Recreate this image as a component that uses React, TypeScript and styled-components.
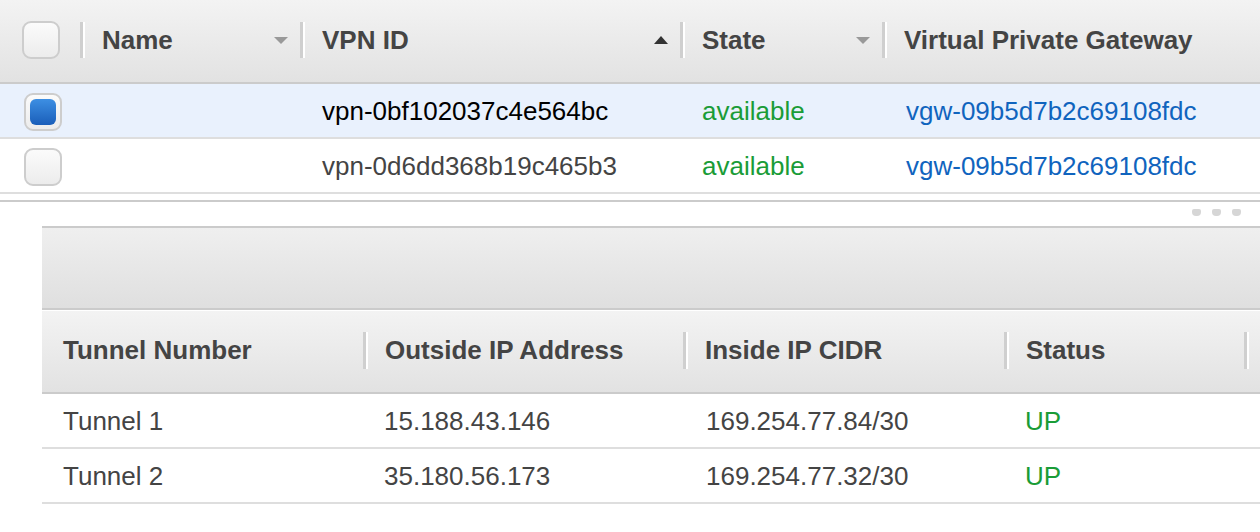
import styled, { createGlobalStyle } from "styled-components";

const GlobalStyle = createGlobalStyle`
  html, body {
    margin: 0;
    padding: 0;
    background: #fff;
  }
  body {
    font-family: "Liberation Sans", Arial, sans-serif;
    width: 1260px;
    height: 532px;
    overflow: hidden;
  }
`;

const Page = styled.div`
  width: 1260px;
  display: flex;
  flex-direction: column;
`;

const GridRow = styled.div<{ $cols: string; $selected?: boolean }>`
  display: grid;
  grid-template-columns: ${(p) => p.$cols};
  align-items: center;
  box-sizing: border-box;
  height: 55px;
  padding-top: 2px;
  border-bottom: 2px solid #dedede;
  background: ${(p) => (p.$selected ? "#e9f1fd" : "#fff")};
  color: ${(p) => (p.$selected ? "#000" : "#444")};
  font-size: 26px;
`;

const HeadRow = styled.div<{ $cols: string; $h: number }>`
  display: grid;
  grid-template-columns: ${(p) => p.$cols};
  align-items: center;
  box-sizing: border-box;
  height: ${(p) => p.$h}px;
  padding-bottom: 2px;
  background: linear-gradient(#f3f3f3, #e2e2e2);
  border-bottom: 2px solid #cbcbcb;
  color: #444;
  font-size: 26px;
  font-weight: bold;
`;

const HeadCell = styled.div<{ $sep?: boolean; $h: number }>`
  display: flex;
  align-items: center;
  height: ${(p) => p.$h}px;
  padding: 0 12px 0 ${(p) => (p.$sep ? 19 : 21)}px;
  border-left: ${(p) => (p.$sep ? "3px solid #cfcfcf" : "none")};
  box-shadow: ${(p) => (p.$sep ? "inset 2px 0 0 #fff" : "none")};
  white-space: nowrap;
`;

const Label = styled.span`
  flex: 1;
`;

const Arrow = styled.span<{ $up?: boolean; $dark?: boolean }>`
  width: 0;
  height: 0;
  border-left: 7px solid transparent;
  border-right: 7px solid transparent;
  ${(p) =>
    p.$up
      ? `border-bottom: 8px solid ${p.$dark ? "#333" : "#999"};`
      : `border-top: 7px solid ${p.$dark ? "#333" : "#999"};`}
`;

const Cell = styled.div<{ $pad?: number; $tone?: "green" | "blue" }>`
  padding-left: ${(p) => p.$pad ?? 22}px;
  white-space: nowrap;
  color: ${(p) =>
    p.$tone === "green" ? "#1a9c37" : p.$tone === "blue" ? "#1064be" : "inherit"};
`;

const Check = styled.div<{ $on?: boolean }>`
  width: 34px;
  height: 34px;
  border: 2px solid #cdcdcd;
  border-radius: 9px;
  background: linear-gradient(#fbfbfb, #ececec);
  display: flex;
  align-items: center;
  justify-content: center;
  &::after {
    content: "";
    display: ${(p) => (p.$on ? "block" : "none")};
    width: 26px;
    height: 26px;
    border-radius: 6px;
    background: linear-gradient(#3d8fe3, #1a5eb9);
  }
`;

const CheckCell = styled.div<{ $x: number }>`
  padding-left: ${(p) => p.$x}px;
`;

const Splitter = styled.div`
  margin-top: 6px;
  border-top: 2px solid #cbcbcb;
  height: 26px;
  display: flex;
  justify-content: flex-end;
  align-items: center;
  gap: 11px;
  padding-right: 19px;
  padding-bottom: 4px;
  box-sizing: border-box;
`;

const Grip = styled.span`
  width: 9px;
  height: 7px;
  border-radius: 2px 2px 4px 4px;
  background: #d6d6d6;
`;

const Detail = styled.div`
  margin-left: 42px;
  border-top: 2px solid #cbcbcb;
`;

const Toolbar = styled.div`
  height: 80px;
  background: linear-gradient(#efefef, #dfdfdf);
  border-bottom: 2px solid #cbcbcb;
  margin-bottom: 1px;
`;

const TunnelRow = styled(GridRow)`
  color: #444;
`;

const topCols = "80px 220px 380px 202px 1fr";
const tunCols = "321px 320px 321px 240px 1fr";

const vpns = [
  { id: "vpn-0bf102037c4e564bc", state: "available", vgw: "vgw-09b5d7b2c69108fdc", on: true },
  { id: "vpn-0d6dd368b19c465b3", state: "available", vgw: "vgw-09b5d7b2c69108fdc", on: false },
];

const tunnels = [
  { name: "Tunnel 1", outside: "15.188.43.146", inside: "169.254.77.84/30", status: "UP" },
  { name: "Tunnel 2", outside: "35.180.56.173", inside: "169.254.77.32/30", status: "UP" },
];

export default function App() {
  return (
    <Page>
      <GlobalStyle />
      <HeadRow $cols={topCols} $h={84}>
        <CheckCell $x={22}>
          <Check />
        </CheckCell>
        <HeadCell $sep $h={36}>
          <Label>Name</Label>
          <Arrow />
        </HeadCell>
        <HeadCell $sep $h={36}>
          <Label>VPN ID</Label>
          <Arrow $up $dark />
        </HeadCell>
        <HeadCell $sep $h={36}>
          <Label>State</Label>
          <Arrow />
        </HeadCell>
        <HeadCell $sep $h={36}>
          <Label>Virtual Private Gateway</Label>
        </HeadCell>
      </HeadRow>
      {vpns.map((v) => (
        <GridRow key={v.id} $cols={topCols} $selected={v.on}>
          <CheckCell $x={24}>
            <Check $on={v.on} />
          </CheckCell>
          <Cell />
          <Cell>{v.id}</Cell>
          <Cell $tone="green">{v.state}</Cell>
          <Cell $pad={24} $tone="blue">{v.vgw}</Cell>
        </GridRow>
      ))}
      <Splitter>
        <Grip />
        <Grip />
        <Grip />
      </Splitter>
      <Detail>
        <Toolbar />
        <HeadRow $cols={tunCols} $h={83}>
          <HeadCell $h={37}>Tunnel Number</HeadCell>
          <HeadCell $sep $h={37}>
            Outside IP Address
          </HeadCell>
          <HeadCell $sep $h={37}>
            Inside IP CIDR
          </HeadCell>
          <HeadCell $sep $h={37}>
            Status
          </HeadCell>
          <HeadCell $sep $h={37} />
        </HeadRow>
        {tunnels.map((t) => (
          <TunnelRow key={t.name} $cols={tunCols}>
            <Cell $pad={21}>{t.name}</Cell>
            <Cell $pad={21}>{t.outside}</Cell>
            <Cell $pad={23}>{t.inside}</Cell>
            <Cell $pad={21} $tone="green">{t.status}</Cell>
            <Cell />
          </TunnelRow>
        ))}
      </Detail>
    </Page>
  );
}
